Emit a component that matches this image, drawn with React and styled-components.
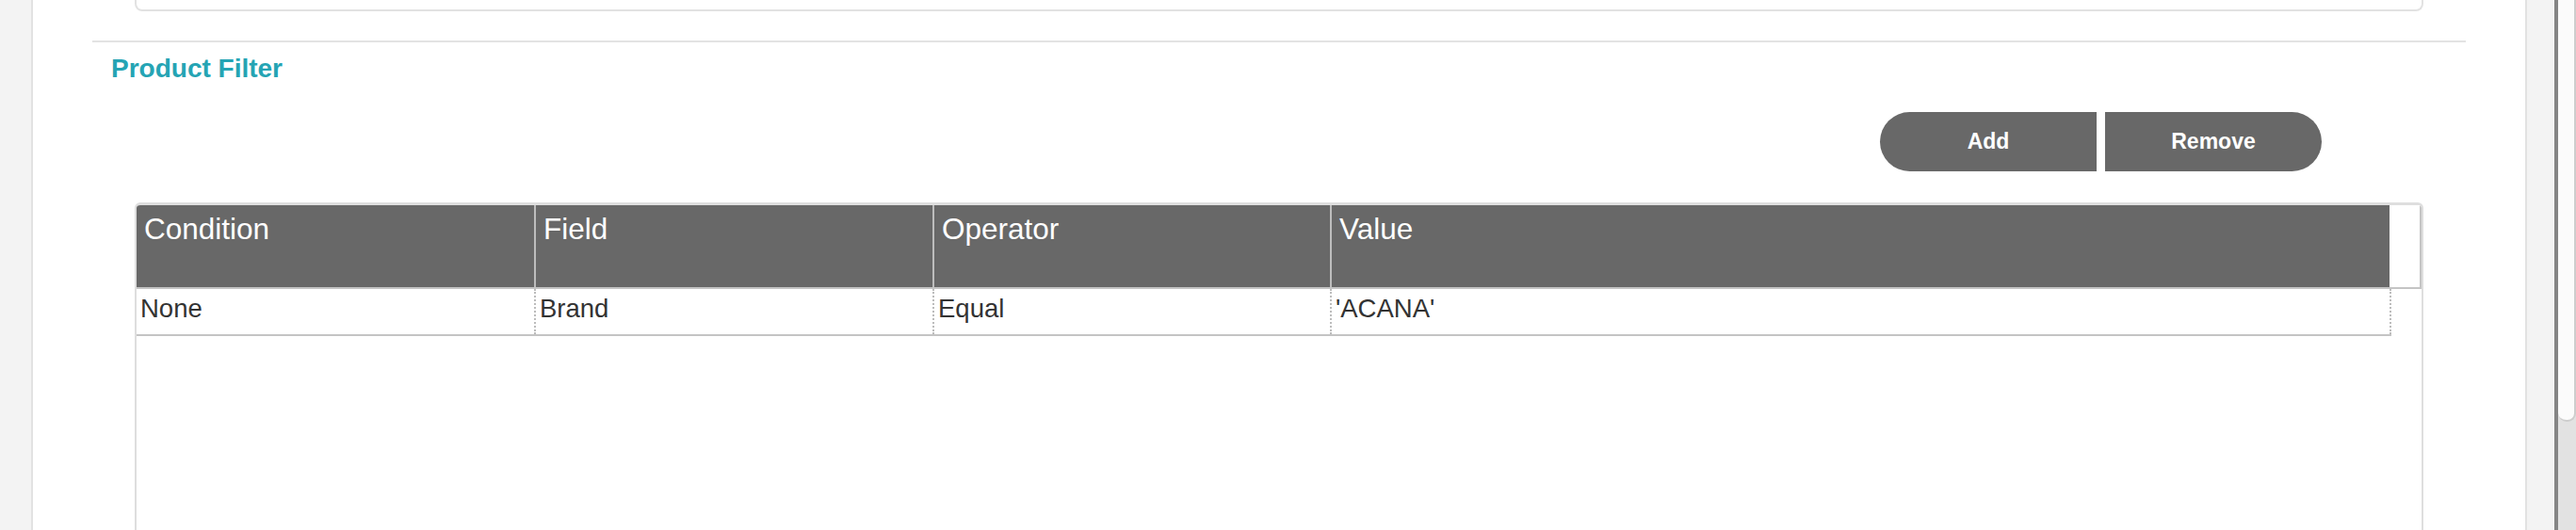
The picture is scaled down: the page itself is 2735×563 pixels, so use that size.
import React from 'react';
import styled, { createGlobalStyle } from 'styled-components';

const GlobalStyle = createGlobalStyle`
  html, body {
    margin: 0;
    padding: 0;
    height: 563px;
    overflow: hidden;
    background: #fff;
    font-family: 'Liberation Sans', Arial, sans-serif;
  }
  * {
    box-sizing: border-box;
  }
`;

const Page = styled.div`
  display: flex;
  height: 563px;
  overflow: hidden;
`;

const Gutter = styled.div`
  flex: none;
  width: ${(props) => props.$width}px;
  background: #f3f3f3;
  ${(props) =>
    props.$side === 'left'
      ? 'border-right: 2px solid #e2e2e2;'
      : 'border-left: 2px solid #e2e2e2;'}
`;

const ScrollTrack = styled.div`
  flex: none;
  width: 23px;
  display: flex;
  flex-direction: column;
  background: #e2e2e2;
  border-left: 4px solid #858585;
`;

const ScrollThumb = styled.div`
  height: 448px;
  background: #fbfbfb;
  border-right: 2px solid #cdcdcd;
  border-bottom: 2px solid #cdcdcd;
  border-radius: 0 0 9px 9px;
`;

const Main = styled.div`
  flex: 1;
  min-width: 0;
  padding: 0 63px;
  background: #fff;
`;

const TopCard = styled.div`
  height: 12px;
  margin: 0 45px;
  border: 2px solid #e2e2e2;
  border-top: none;
  border-radius: 0 0 8px 8px;
`;

const Section = styled.section`
  margin-top: 31px;
  border-top: 2px solid #e3e3e3;
`;

const Title = styled.h2`
  margin: 12px 0 0 20px;
  font-size: 28px;
  line-height: 32px;
  font-weight: bold;
  color: #25a4b4;
`;

const ButtonBar = styled.div`
  display: flex;
  justify-content: flex-end;
  gap: 9px;
  margin-top: 30px;
  padding-right: 153px;
`;

const Button = styled.button`
  width: 230px;
  height: 63px;
  border: none;
  padding: 0;
  background: #686868;
  color: #fff;
  font-family: 'Liberation Sans', Arial, sans-serif;
  font-size: 23px;
  font-weight: bold;
  cursor: pointer;
  border-radius: ${(props) => (props.$side === 'left' ? '32px 0 0 32px' : '0 32px 32px 0')};
`;

const Grid = styled.div`
  margin: 33px 45px 0;
  height: 400px;
  border: 2px solid #dedede;
  border-top-width: 3px;
  border-bottom: none;
  border-radius: 6px 6px 0 0;
  overflow: hidden;
`;

const HeaderRow = styled.div`
  display: flex;
  border-bottom: 2px solid #c4c4c4;
`;

const Columns = styled.div`
  flex: 1;
  display: grid;
  grid-template-columns: 422px 423px 422px 1fr;
`;

const HeaderCell = styled.div`
  height: 87px;
  padding: 7px 8px 0;
  background: #686868;
  color: #fff;
  font-size: 31.5px;
  border-left: ${(props) => (props.$first ? 'none' : '2px solid #bdbdbd')};
`;

const ScrollCorner = styled.div`
  flex: none;
  width: 34px;
  background: #fff;
  border-right: 2px solid #c4c4c4;
`;

const BodyRow = styled.div`
  display: grid;
  grid-template-columns: 422px 423px 422px 1fr;
  width: calc(100% - 32px);
  border-bottom: 2px solid #c4c4c4;
`;

const BodyCell = styled.div`
  height: 48px;
  padding: 5px 4px 0;
  color: #333;
  font-size: 27.5px;
  border-left: ${(props) => (props.$first ? 'none' : '2px dotted #bcbcbc')};
  ${(props) => props.$last && 'border-right: 2px dotted #bcbcbc;'}
`;

const columns = ['Condition', 'Field', 'Operator', 'Value'];
const rows = [['None', 'Brand', 'Equal', "'ACANA'"]];

function App() {
  return (
    <>
      <GlobalStyle />
      <Page>
        <Gutter $width={35} $side="left" />
        <Main>
          <TopCard />
          <Section>
            <Title>Product Filter</Title>
            <ButtonBar>
              <Button $side="left">Add</Button>
              <Button $side="right">Remove</Button>
            </ButtonBar>
            <Grid>
              <HeaderRow>
                <Columns>
                  {columns.map((col, i) => (
                    <HeaderCell key={col} $first={i === 0}>
                      {col}
                    </HeaderCell>
                  ))}
                </Columns>
                <ScrollCorner />
              </HeaderRow>
              {rows.map((row, r) => (
                <BodyRow key={r}>
                  {row.map((cell, i) => (
                    <BodyCell key={i} $first={i === 0} $last={i === row.length - 1}>
                      {cell}
                    </BodyCell>
                  ))}
                </BodyRow>
              ))}
            </Grid>
          </Section>
        </Main>
        <Gutter $width={31} $side="right" />
        <ScrollTrack>
          <ScrollThumb />
        </ScrollTrack>
      </Page>
    </>
  );
}

export default App;
